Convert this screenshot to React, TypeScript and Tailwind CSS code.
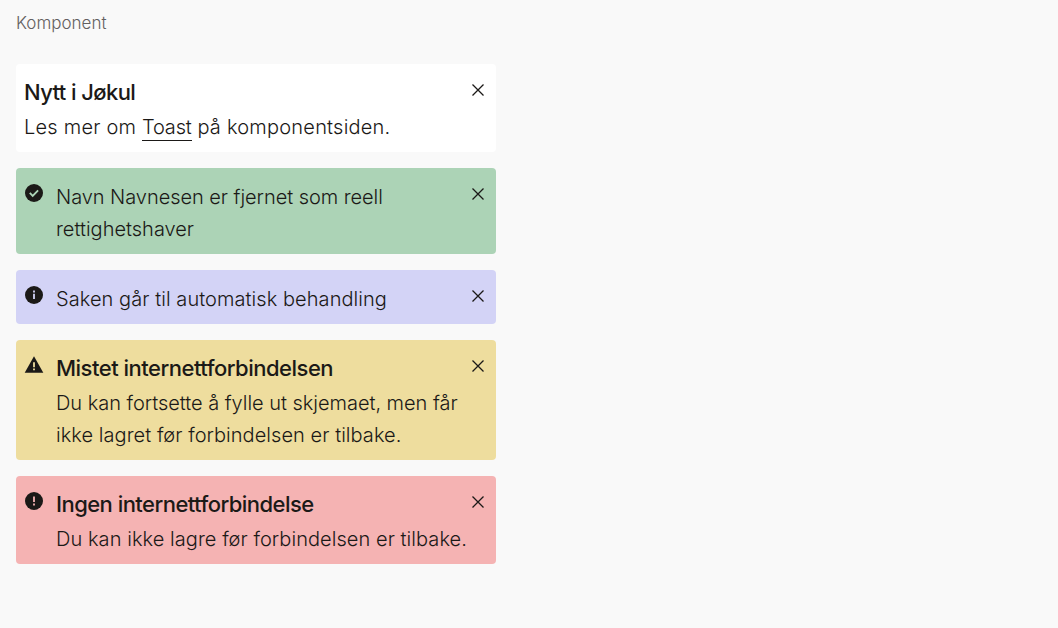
import React from "react";

type Tone = "plain" | "success" | "info" | "warning" | "error";

const backgrounds: Record<Tone, string> = {
  plain: "bg-white",
  success: "bg-[#acd3b6]",
  info: "bg-[#d3d3f6]",
  warning: "bg-[#eedd9e]",
  error: "bg-[#f5b3b3]",
};

function ToneIcon({ tone }: { tone: Tone }) {
  return (
    <svg viewBox="0 0 20 20" className="mr-3 size-5 shrink-0" fill="#1b1917">
      {tone === "warning" ? (
        <>
          <path d="M10 1.2 L19.3 17.8 H0.7 Z" />
          <path d="M9.1 7.2h1.8v5H9.1zM9.1 13.4h1.8v1.8H9.1z" className="fill-[#eedd9e]" />
        </>
      ) : (
        <circle cx="10" cy="10" r="9" />
      )}
      {tone === "success" && (
        <path d="M5.8 9.9l2.9 2.9 5.4-5.4" fill="none" className="stroke-[#acd3b6]" strokeWidth="1.9" />
      )}
      {tone === "info" && <path d="M9.1 5.6h1.8v1.8H9.1zM9.1 8.8h1.8v5.2H9.1z" className="fill-[#d3d3f6]" />}
      {tone === "error" && <path d="M9.1 5.4h1.8v5.6H9.1zM9.1 12.6h1.8v1.8H9.1z" className="fill-[#f5b3b3]" />}
    </svg>
  );
}

function Line({ spacing, children }: { spacing: string; children: React.ReactNode }) {
  return <span className={`block h-8 whitespace-nowrap ${spacing}`}>{children}</span>;
}

function Toast({
  tone,
  title,
  titleSpacing = "",
  children,
}: {
  tone: Tone;
  title?: string;
  titleSpacing?: string;
  children: React.ReactNode;
}) {
  return (
    <section className={`flex items-start rounded px-2 pb-[9px] ${backgrounds[tone]} ${title ? "pt-3" : "pt-[13px]"}`}>
      {tone !== "plain" && (
        <div className={title ? "pt-[3px]" : "pt-[2px]"}>
          <ToneIcon tone={tone} />
        </div>
      )}
      <div className="min-w-0 flex-1 text-[20px] leading-8 font-light">
        {title && <h2 className={`h-[35px] text-[22px] font-medium whitespace-nowrap ${titleSpacing}`}>{title}</h2>}
        {children}
      </div>
      <button aria-label="Lukk" className={`mr-1 ${title ? "mt-2" : "mt-[7px]"}`}>
        <svg viewBox="0 0 12 12" className="size-3" fill="none" stroke="#1b1917" strokeWidth="1.3">
          <path d="M.5.5l11 11M11.5.5L.5 11.5" />
        </svg>
      </button>
    </section>
  );
}

export default function App() {
  return (
    <main className="min-h-screen bg-[#f9f9f9] px-4 pt-[11px] font-['Inter',sans-serif] text-[#1b1917]">
      <p className="mb-[29px] text-[17px] leading-6 font-light text-[#636060]">Komponent</p>
      <div className="flex w-[480px] flex-col gap-4">
        <Toast tone="plain" title="Nytt i Jøkul" titleSpacing="tracking-[-0.6px]">
          <Line spacing="tracking-[0.22px]">
            Les mer om{" "}
            <a href="#" className="border-b border-[#1b1917] pb-px tracking-[-0.2px]">Toast</a>
            {" "}på komponentsiden.
          </Line>
        </Toast>
        <Toast tone="success">
          <Line spacing="tracking-[-0.05px]">Navn Navnesen er fjernet som reell</Line>
          <Line spacing="tracking-normal">rettighetshaver</Line>
        </Toast>
        <Toast tone="info">
          <Line spacing="tracking-[0.06px]">Saken går til automatisk behandling</Line>
        </Toast>
        <Toast tone="warning" title="Mistet internettforbindelsen" titleSpacing="tracking-[-0.5px]">
          <Line spacing="tracking-[-0.03px]">Du kan fortsette å fylle ut skjemaet, men får</Line>
          <Line spacing="tracking-[0.05px]">ikke lagret før forbindelsen er tilbake.</Line>
        </Toast>
        <Toast tone="error" title="Ingen internettforbindelse" titleSpacing="tracking-[-0.54px]">
          <Line spacing="tracking-[0.06px]">Du kan ikke lagre før forbindelsen er tilbake.</Line>
        </Toast>
      </div>
    </main>
  );
}
